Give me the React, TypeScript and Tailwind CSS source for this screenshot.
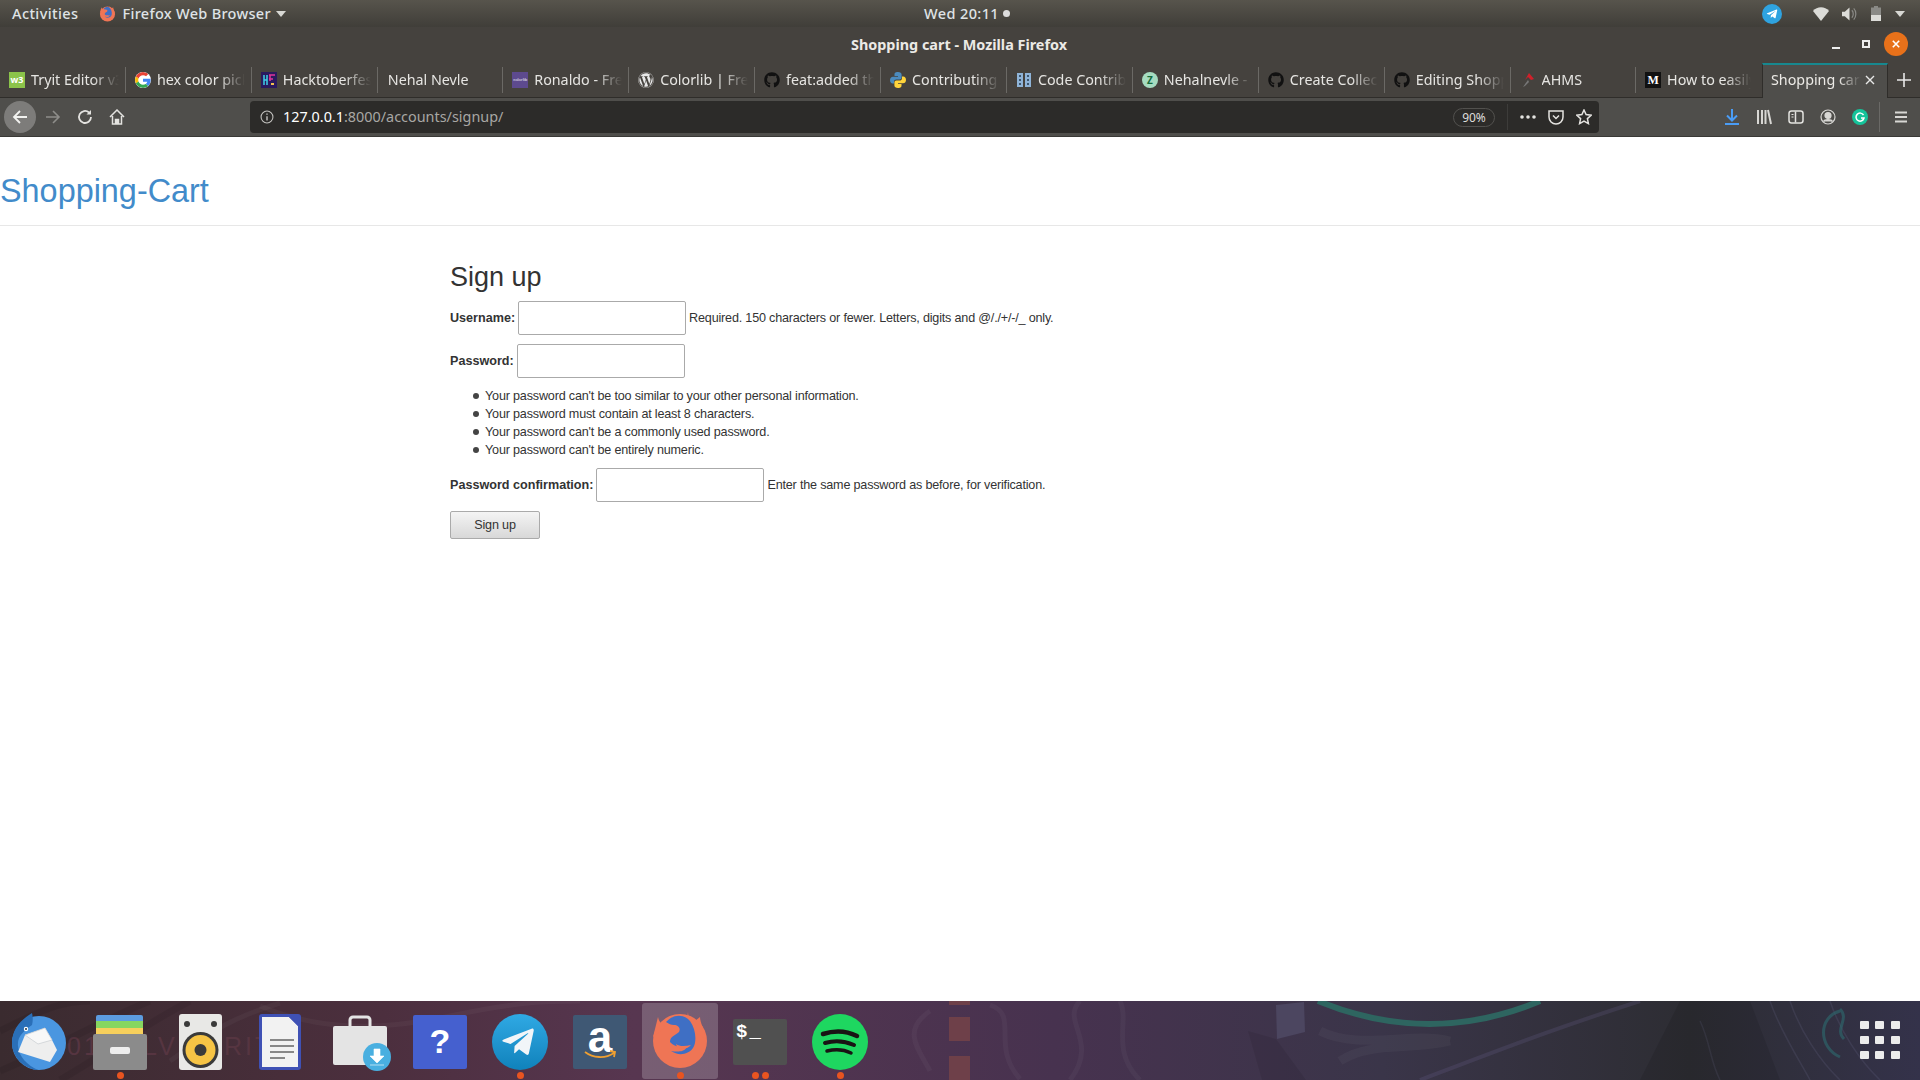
import { ReactNode } from "react";
import { FaGithub, FaWordpress, FaTelegramPlane } from "react-icons/fa";

function GoogleG() {
  return (
    <svg viewBox="0 0 48 48" className="w-4 h-4 rounded-full bg-white">
      <path fill="#EA4335" d="M24 9.500c3.500 0 6.700 1.200 9.200 3.600l6.800-6.800C35.900 2.400 30.500 0 24 0 14.600 0 6.500 5.400 2.600 13.200l8 6.200C12.400 13.700 17.700 9.500 24 9.500z" />
      <path fill="#4285F4" d="M47 24.500c0-1.600-.1-3.100-.4-4.500H24v9h12.900c-.6 3-2.200 5.500-4.700 7.200l7.700 6C44.400 38 47 31.900 47 24.500z" />
      <path fill="#FBBC05" d="M10.500 28.700c-.5-1.400-.8-3-.8-4.700s.3-3.200.8-4.700l-8-6.200C.9 16.400 0 20.100 0 24s.9 7.600 2.600 10.900l7.900-6.200z" />
      <path fill="#34A853" d="M24 48c6.500 0 11.900-2.100 15.900-5.800l-7.700-6c-2.200 1.400-4.900 2.300-8.200 2.300-6.300 0-11.600-4.200-13.500-9.900l-8 6.200C6.500 42.600 14.600 48 24 48z" />
    </svg>
  );
}

function FirefoxMark({ className }: { className: string }) {
  return (
    <svg viewBox="0 0 60 64" className={className}>
      <ellipse cx="30" cy="32" rx="27" ry="27" fill="#ef7555" />
      <path d="M8 8c1 6 5 8 8 10L3 28z" fill="#ef7555" />
      <path d="M38 3c0 7 4 7 7 9l5-4c0 6 5 14 6 22L36 18z" fill="#ef7555" />
      <path d="M16 13C23 5 34 5 40 12c6 8 7 21 3 27-5 7-15 8-22 3 6 1 13 1 15-3-6-1-13-2-16-6 0-6 6-7 9-10 2-4-1-7-5-7-3 0-5-1-8-3z" fill="#3f6fc4" />
      <path d="M26 35c4 3 10 2 15 1-3 4-9 5-14 2z" fill="#ef7555" />
    </svg>
  );
}

function PythonIcon() {
  return (
    <svg viewBox="0 0 16 16" className="w-4 h-4">
      <path d="M8 0C5 0 4.500 1.200 4.500 2.500V4H8v.7H3C1.200 4.700 0 6 0 8s1.100 3.500 2.800 3.500H4V9.700C4 8.300 5.100 7.400 6.400 7.400h3.200c1.100 0 2-.9 2-2V2.500C11.600 1 10.300 0 8 0z" fill="#4b8bbe" />
      <path d="M8 16c3 0 3.500-1.200 3.500-2.500V12H8v-.7h5c1.800 0 3-1.300 3-3.300s-1.100-3.500-2.800-3.500H12v1.800c0 1.400-1.100 2.300-2.400 2.300H6.400c-1.100 0-2 .9-2 2v2.900C4.400 15 5.700 16 8 16z" fill="#ffd43b" />
    </svg>
  );
}

const TABS: { title: string; icon?: ReactNode }[] = [
  { title: "Tryit Editor v3.6", icon: <span className="w-4 h-4 bg-[#8bc34a] text-white text-[9px] font-bold leading-4 text-center">w3</span> },
  { title: "hex color picker", icon: <GoogleG /> },
  {
    title: "Hacktoberfest",
    icon: (
      <svg viewBox="0 0 16 16" className="w-4 h-4">
        <rect width="16" height="16" fill="#2a1a5e" />
        <path d="M3 3v10M6 3v10M3 8h3" stroke="#3fd0e8" strokeWidth="1.500" />
        <path d="M8 3h6M8 7h4M9 3v6" stroke="#e0359b" strokeWidth="1.500" />
        <path d="M10 11h3v2h-3z" fill="#f2c14e" />
      </svg>
    ),
  },
  { title: "Nehal Nevle" },
  { title: "Ronaldo - Free", icon: <span className="w-4 h-4 bg-[#5d4a8e] text-white text-[4px] leading-4 text-center">colorlib</span> },
  { title: "Colorlib | Free", icon: <FaWordpress className="w-4 h-4 text-[#e8e8e8]" /> },
  { title: "feat:added the", icon: <FaGithub className="w-4 h-4 text-[#111]" /> },
  { title: "Contributing to", icon: <PythonIcon /> },
  {
    title: "Code Contributors",
    icon: (
      <svg viewBox="0 0 16 16" className="w-4 h-4">
        <rect x="1" y="1" width="14" height="14" fill="#8fb4d8" />
        <rect x="7" y="1" width="2" height="14" fill="#45423e" />
        <path d="M3 4h2M3 8h2M3 12h2M11 4h2M11 8h2M11 12h2" stroke="#23384d" strokeWidth="1.500" />
      </svg>
    ),
  },
  {
    title: "Nehalnevle - Overview",
    icon: <span className="w-4 h-4 rounded-full bg-[#a5dcc0] text-[#136b3c] text-[10px] font-bold leading-4 text-center">Z</span>,
  },
  { title: "Create Collection", icon: <FaGithub className="w-4 h-4 text-[#111]" /> },
  { title: "Editing Shopping", icon: <FaGithub className="w-4 h-4 text-[#111]" /> },
  {
    title: "AHMS",
    icon: (
      <svg viewBox="0 0 16 16" className="w-4 h-4">
        <path d="M9 1l5 6-3 1-3-3-3 3z" fill="#d0202a" />
        <path d="M8 8l-5 7 2-1 4-4z" fill="#777" />
      </svg>
    ),
  },
  { title: "How to easily", icon: <span className="w-4 h-4 bg-[#111] text-white text-[12px] font-bold leading-4 text-center font-['Liberation_Serif',serif]">M</span> },
];

function Tab({ title, icon, last }: { title: string; icon?: ReactNode; last: boolean }) {
  return (
    <div className={`w-[125.930px] h-full flex items-center ${icon ? "pl-[9px] gap-[6px]" : "pl-[10px]"} pr-[11px]`}>
      {icon && <span className="w-4 h-4 shrink-0 flex">{icon}</span>}
      <span className="flex-1 overflow-hidden whitespace-nowrap text-[14.300px] text-[#e6e5e2] [mask-image:linear-gradient(to_right,black_70%,transparent_100%)]">
        {title}
      </span>
      {!last && <span className="w-px h-[26px] bg-[#6b6965] shrink-0 -mr-[11px]" />}
    </div>
  );
}

function TopBar() {
  return (
    <div className="h-[27px] grid grid-cols-3 items-center bg-gradient-to-b from-[#57544c] to-[#403e39] text-[14.500px] font-medium tracking-[0.4px] text-[#dfe3e6]">
      <div className="flex items-center pl-3">
        <span>Activities</span>
        <FirefoxMark className="w-[17px] h-[18px] ml-[21px]" />
        <span className="ml-[6px] tracking-[0.3px]">Firefox Web Browser</span>
        <svg viewBox="0 0 10 6" className="w-[10px] h-[6px] ml-[5px]">
          <path d="M0 0h10L5 6z" fill="#d8d8d4" />
        </svg>
      </div>
      <div className="flex items-center justify-center gap-[4px] pl-[14px]">
        <span>Wed 20:11</span>
        <span className="w-[7px] h-[7px] rounded-full bg-[#dcdcdc]" />
      </div>
      <div className="flex items-center justify-end h-full">
        <span className="w-5 h-5 rounded-full bg-[#2fa3e0] flex items-center justify-center">
          <FaTelegramPlane className="w-3 h-3 text-white -ml-px" />
        </span>
        <svg viewBox="0 0 16 14" className="w-4 h-[14px] ml-[31px]">
          <path d="M0 4c4-5 12-5 16 0L8 14z" fill="#dcdcd8" />
        </svg>
        <svg viewBox="0 0 16 14" className="w-[15px] h-[14px] ml-[13px]">
          <path d="M0 4.500h3L8 0v14L3 9.500H0z" fill="#dcdcd8" />
          <path d="M10.500 3c2 2 2 6 0 8M12.500 1c3 3 3 9 0 12" stroke="#8a8a86" strokeWidth="1.300" fill="none" />
        </svg>
        <svg viewBox="0 0 10 15" className="w-[10px] h-[15px] ml-[14px]">
          <path d="M3 0h4v1.500h3V15H0V1.500h3z" fill="#8a8a86" />
          <path d="M0 9h10v6H0z" fill="#dcdcd8" />
        </svg>
        <svg viewBox="0 0 10 6" className="w-[10px] h-[6px] ml-[14px] mr-[15px]">
          <path d="M0 0h10L5 6z" fill="#d8d8d4" />
        </svg>
      </div>
    </div>
  );
}

function TitleBar() {
  return (
    <div className="h-9 bg-[#45423e] flex items-center relative">
      <span className="flex-1 text-center text-[14.400px] font-bold text-[#eceae6] -mt-[1px] pr-[2px]">Shopping cart - Mozilla Firefox</span>
      <span className="absolute left-[1832px] top-[20px] w-2 h-[2px] bg-[#eee]" />
      <span className="absolute left-[1862px] top-[13px] w-2 h-2 border-2 border-[#eee]" />
      <span className="absolute left-[1884px] top-[5px] w-6 h-6 rounded-full bg-[#e8711a] flex items-center justify-center">
        <svg viewBox="0 0 10 10" className="w-2 h-2">
          <path d="M1 1l8 8M9 1l-8 8" stroke="#fff" strokeWidth="2" />
        </svg>
      </span>
    </div>
  );
}

function TabStrip() {
  return (
    <div className="h-[35px] bg-[#45423e] border-b border-[#2f2d2a] flex items-stretch">
      <div className="flex h-[34px] w-[1762px] items-center">
        {TABS.map((t, i) => (
          <Tab key={t.title} title={t.title} icon={t.icon} last={i === TABS.length - 1} />
        ))}
      </div>
      <div className="w-[126px] h-[35px] bg-[#4f4e4b] border-t-2 border-t-[#17888f] border-x border-x-[#2f2d2a] flex items-center pl-[8px] pr-[8px] pb-[3px] gap-1 relative z-10">
        <span className="flex-1 overflow-hidden whitespace-nowrap text-[14.300px] text-[#eceae6] [mask-image:linear-gradient(to_right,black_75%,transparent_100%)]">
          Shopping cart - Mozilla
        </span>
        <svg viewBox="0 0 10 10" className="w-[10px] h-[10px] mr-[4px] shrink-0">
          <path d="M1 1l8 8M9 1l-8 8" stroke="#e8e8e8" strokeWidth="1.400" />
        </svg>
      </div>
      <div className="flex-1 flex items-center justify-center">
        <svg viewBox="0 0 14 14" className="w-[14px] h-[14px]">
          <path d="M7 0v14M0 7h14" stroke="#e8e8e8" strokeWidth="1.600" />
        </svg>
      </div>
    </div>
  );
}

function NavSlot({ width, children }: { width: string; children: ReactNode }) {
  return <span className={`${width} flex items-center justify-center shrink-0`}>{children}</span>;
}

function NavBar() {
  const stroke = "#e4e3e0";
  return (
    <div className="h-[39px] bg-[#4f4e4b] border-b border-[#3a3936] flex items-center">
      <div className="w-[250px] flex items-center shrink-0 pl-1">
        <span className="w-8 h-8 rounded-full bg-[#7d7c7a] flex items-center justify-center">
          <svg viewBox="0 0 16 16" className="w-4 h-4" fill="none" stroke="#f2f2f0" strokeWidth="1.800">
            <path d="M15 8H2M8 2L2 8l6 6" />
          </svg>
        </span>
        <svg viewBox="0 0 16 16" className="w-4 h-4 ml-[9px]" fill="none" stroke="#8e8d8a" strokeWidth="1.600">
          <path d="M1 8h13M8 2l6 6-6 6" />
        </svg>
        <svg viewBox="0 0 16 16" className="w-4 h-4 ml-[16px]" fill="none" stroke={stroke} strokeWidth="1.800">
          <path d="M14 8a6 6 0 1 1-2-4.500" />
          <path d="M14 1v4.500H9.500z" fill={stroke} stroke="none" />
        </svg>
        <svg viewBox="0 0 16 16" className="w-4 h-4 ml-[16px]" fill="none" stroke={stroke} strokeWidth="1.500">
          <path d="M1 8l7-7 7 7M3.500 7v8h9V7" />
          <path d="M6.500 15v-4.500h3V15" fill={stroke} />
        </svg>
      </div>
      <div className="w-[1349px] h-8 rounded-[4px] bg-[#2c2b29] flex items-center shrink-0">
        <svg viewBox="0 0 16 16" className="w-[14px] h-[14px] ml-[10px]" fill="none" stroke="#c4c3c0" strokeWidth="1.200">
          <circle cx="8" cy="8" r="6.800" />
          <path d="M8 7v5M8 4v1.500" strokeWidth="1.600" />
        </svg>
        <span className="ml-[9px] text-[14.400px] text-white">
          127.0.0.1<span className="text-[#a8a7a4]">:8000/accounts/signup/</span>
        </span>
        <span className="ml-auto w-[42px] h-[19px] rounded-full border border-[#52514e] text-[12px] leading-[17px] text-center text-[#dedddb]">90%</span>
        <span className="w-px h-[26px] bg-[#3d3c3a] ml-[12px]" />
        <svg viewBox="0 0 16 4" className="w-[16px] h-1 ml-[12px]">
          <circle cx="2" cy="2" r="1.800" fill={stroke} />
          <circle cx="8" cy="2" r="1.800" fill={stroke} />
          <circle cx="14" cy="2" r="1.800" fill={stroke} />
        </svg>
        <svg viewBox="0 0 16 16" className="w-4 h-4 ml-[12px]" fill="none" stroke={stroke} strokeWidth="1.500">
          <path d="M1 2h14v6a7 7 0 0 1-14 0z" />
          <path d="M5 6.500l3 3 3-3" />
        </svg>
        <svg viewBox="0 0 16 16" className="w-4 h-4 ml-[12px] mr-[7px]" fill="none" stroke={stroke} strokeWidth="1.500">
          <path d="M8 1l2.100 4.600 5 .6-3.700 3.400 1 5L8 12.100 3.600 14.600l1-5L.9 6.200l5-.6z" />
        </svg>
      </div>
      <div className="flex-1 flex items-center pl-[117px]">
        <NavSlot width="w-8">
          <svg viewBox="0 0 16 16" className="w-4 h-4" fill="none" stroke="#4a9cf5" strokeWidth="2">
            <path d="M8 0v11M3 6.500l5 5 5-5M1 15h14" />
          </svg>
        </NavSlot>
        <NavSlot width="w-8">
          <svg viewBox="0 0 16 16" className="w-4 h-4" fill="none" stroke="#d8d7d4" strokeWidth="2">
            <path d="M2 1v14M6 1v14M9.500 1v14M12 1l3 14" />
          </svg>
        </NavSlot>
        <NavSlot width="w-8">
          <svg viewBox="0 0 16 16" className="w-4 h-4" fill="none" stroke={stroke} strokeWidth="1.500">
            <rect x="1" y="2" width="14" height="12" rx="2.500" />
            <path d="M7.500 2.500v11" />
            <path d="M3.500 5.500h2M3.500 8h2" strokeWidth="1" />
          </svg>
        </NavSlot>
        <NavSlot width="w-8">
          <svg viewBox="0 0 16 16" className="w-4 h-4" fill="none" stroke="#d8d7d4" strokeWidth="1.200">
            <circle cx="8" cy="8" r="7" />
            <circle cx="8" cy="6.500" r="3" fill="#d8d7d4" />
            <path d="M3.500 12.500c1-2.500 8-2.500 9 0" fill="#d8d7d4" />
          </svg>
        </NavSlot>
        <NavSlot width="w-8">
          <span className="w-4 h-4 rounded-full bg-[#15c39a] flex items-center justify-center">
            <svg viewBox="0 0 10 10" className="w-[10px] h-[10px]" fill="none" stroke="#fff" strokeWidth="1.500">
              <path d="M8.500 3A4 4 0 1 0 9 6H6" />
            </svg>
          </span>
        </NavSlot>
        <span className="w-px h-[30px] bg-[#6a6966] ml-[3px]" />
        <NavSlot width="w-[42px]">
          <svg viewBox="0 0 14 12" className="w-[14px] h-3" stroke="#d8d7d4" strokeWidth="2.200">
            <path d="M1 1.500h12M1 6h12M1 10.500h12" />
          </svg>
        </NavSlot>
      </div>
    </div>
  );
}

function Field({ label, help }: { label: string; help?: string }) {
  return (
    <div className="flex items-center h-[34px]">
      <label className="font-bold mr-[3px]">{label}</label>
      <input type="text" className="w-[168px] h-[34px] bg-white border border-[#aaa] rounded-[2px] outline-none" />
      {help && <span className="ml-[3px] tracking-[-0.190px]">{help}</span>}
    </div>
  );
}

const PASSWORD_RULES = [
  "Your password can't be too similar to your other personal information.",
  "Your password must contain at least 8 characters.",
  "Your password can't be a commonly used password.",
  "Your password can't be entirely numeric.",
];

function SignupPage() {
  return (
    <div className="flex-1 bg-white font-['Liberation_Sans',sans-serif] text-[#333] text-[12.600px]">
      <div className="h-[89px] border-b border-[#e7e7e7] flex items-center">
        <a className="text-[32.400px] text-[#428bca] mt-[21px]">Shopping-Cart</a>
      </div>
      <div className="ml-[450px] pt-[36px]">
        <h2 className="text-[27px] leading-[30px] mb-[9px]">Sign up</h2>
        <Field label="Username:" help="Required. 150 characters or fewer. Letters, digits and @/./+/-/_ only." />
        <div className="mt-[9px]">
          <Field label="Password:" />
        </div>
        <ul className="mt-[9px] mb-[9px] pl-[23px] leading-[18px] tracking-[-0.180px]">
          {PASSWORD_RULES.map((rule) => (
            <li key={rule} className="flex items-center gap-[6px]">
              <span className="w-[6px] h-[6px] rounded-full bg-[#444] shrink-0" />
              {rule}
            </li>
          ))}
        </ul>
        <Field label="Password confirmation:" help="Enter the same password as before, for verification." />
        <button className="mt-[9px] w-[90px] h-[28px] rounded-[2px] border border-[#aaa] bg-gradient-to-b from-[#f4f4f4] to-[#d8d8d8] tracking-[-0.180px] text-[#333]">
          Sign up
        </button>
      </div>
    </div>
  );
}

function Dots({ count }: { count: number }) {
  return (
    <span className="absolute bottom-[1px] left-0 right-0 flex justify-center gap-[3px]">
      {Array.from({ length: count }).map((_, i) => (
        <span key={i} className="w-[7px] h-[7px] rounded-full bg-[#e95420]" />
      ))}
    </span>
  );
}

function DockItem({ dots = 0, active = false, children }: { dots?: number; active?: boolean; children: ReactNode }) {
  return (
    <div className="relative w-20 h-full flex items-center justify-center pt-[2px]">
      {active && <span className="absolute inset-x-[2px] top-[2px] bottom-[1px] rounded-[3px] bg-white/20" />}
      <span className="relative flex">{children}</span>
      {dots > 0 && <Dots count={dots} />}
    </div>
  );
}

// wallpaper behind the dock, only the shapes that show through
function DockBackdrop() {
  return (
    <svg viewBox="0 0 1920 79" preserveAspectRatio="none" className="absolute inset-0 w-full h-full">
      <g fill="#563541" fontFamily="Liberation Sans, sans-serif" fontSize="25" letterSpacing="3">
        <text x="67" y="54">01</text>
        <text x="143" y="54">LV</text>
        <text x="224" y="54">RITT</text>
      </g>
      <g fill="none" stroke="#000000" strokeOpacity="0.07" strokeWidth="7">
        <path d="M0 30C40 10 60 0 90 0M0 70C70 40 100 20 150 0M60 79C110 50 150 20 190 0" />
      </g>
      <g fill="none" stroke="#ffffff" strokeOpacity="0.035" strokeWidth="5">
        <path d="M260 5c60 25 120 25 190 10s100-15 130-15" />
        <path d="M170 60c30-20 50-40 110-58" />
        <path d="M930 10c-30 20-10 40 0 60M990 4c30 10 0 40 30 74M1080 0c-20 20 20 40-10 79M1120 0c10 20-10 50 20 79" />
        <path d="M1320 30c40 20 90 0 130 10M1340 60c30-20 70-10 110-20" strokeWidth="9" />
      </g>
      <g fill="none" stroke="#7a6fa8" strokeOpacity="0.18" strokeWidth="4">
        <path d="M1420 79c80-30 130-50 220-79" />
      </g>
      <g fill="none" stroke="#8a86b0" strokeOpacity="0.14" strokeWidth="1.500">
        <path d="M1770 0c10 30 30 60 40 79M1790 0c10 30 30 60 50 79M1830 0c10 30 30 60 50 79M1700 20c10 20 10 40 20 59" />
      </g>
      <path d="M1318 0Q1430 46 1540 0" fill="none" stroke="#2e6560" strokeWidth="6" />
      <rect x="949" y="16" width="21" height="24" fill="#6e4049" />
      <rect x="949" y="55" width="21" height="24" fill="#6e4049" />
      <rect x="949" y="0" width="21" height="4" fill="#6e4049" />
      <path d="M1276 4l28-3 1 30-28 7z" fill="#4c4660" />
      <path d="M1248 30l28 8 30 41h-44z" fill="#000" fillOpacity="0.08" />
      <path d="M1640 79l40-79h70l30 79z" fill="#000" fillOpacity="0.1" />
      <path d="M1840 10c-22 6-22 36 0 46M1840 8c10 10-6 20 4 30" fill="none" stroke="#2d6a70" strokeWidth="3" strokeOpacity="0.6" />
    </svg>
  );
}

function Dock() {
  return (
    <div className="h-[79px] relative overflow-hidden flex bg-[linear-gradient(to_right,#3a2b2f_0%,#4c2f3e_20%,#573650_33%,#47324f_55%,#3a3549_72%,#2d2d33_88%,#34324a_100%)]">
      <DockBackdrop />
      <DockItem>
        <svg viewBox="0 0 60 60" className="w-[60px] h-[60px]">
          <circle cx="29" cy="31" r="27" fill="#4a96e0" />
          <path d="M22 1C10 8 2 18 2 31c0 14 12 26 26 27-11-5-19-13-20-24-1-10 6-15 14-21 1-4 1-8 0-12z" fill="#2a6fb8" />
          <path d="M15 23l20-7 7 12 5 10-7 12-32-10z" fill="#eeeeee" />
          <path d="M15 23l13 9 14-4-7-12z" fill="#f8f8f8" stroke="#cdd0d4" strokeWidth="0.800" />
          <circle cx="16" cy="17" r="2.200" fill="#fff" />
          <circle cx="16" cy="17" r="1" fill="#234" />
        </svg>
      </DockItem>
      <DockItem dots={1}>
        <svg viewBox="0 0 56 56" className="w-14 h-14">
          <rect x="4" y="1" width="47" height="12" rx="2" fill="#5c9ce0" />
          <rect x="4" y="7" width="47" height="12" fill="#86d660" />
          <rect x="4" y="14" width="47" height="12" fill="#f6cf5c" />
          <rect x="1" y="20" width="54" height="36" rx="2" fill="#8b8b8b" />
          <rect x="18" y="33" width="20" height="7" rx="2" fill="#eeeeee" />
        </svg>
      </DockItem>
      <DockItem>
        <svg viewBox="0 0 56 56" className="w-14 h-14">
          <rect x="7" y="0" width="43" height="56" rx="3" fill="#e8e8e6" />
          <circle cx="15" cy="10" r="3" fill="#3a3a3a" />
          <circle cx="42" cy="10" r="3" fill="#3a3a3a" />
          <circle cx="28.500" cy="36" r="18" fill="#3a3a3a" />
          <circle cx="28.500" cy="36" r="15" fill="#f6c445" />
          <circle cx="28.500" cy="36" r="6" fill="#3a3a3a" />
        </svg>
      </DockItem>
      <DockItem>
        <svg viewBox="0 0 56 56" className="w-14 h-14">
          <rect x="7" y="0" width="42" height="56" rx="3" fill="#3f51b5" />
          <path d="M10 3h27l9 9v41H10z" fill="#f2f2f2" />
          <path d="M37 3l9 9V3z" fill="#3f51b5" />
          <path d="M18 26h24M18 32h24M18 38h24M18 44h15" stroke="#888" strokeWidth="2" />
        </svg>
      </DockItem>
      <DockItem>
        <svg viewBox="0 0 60 58" className="w-[60px] h-[58px] ml-[4px]">
          <path d="M18 14V7a3 3 0 0 1 3-3h14a3 3 0 0 1 3 3v7" fill="none" stroke="#e4e4e4" strokeWidth="3" />
          <rect x="1" y="13" width="54" height="39" rx="2" fill="#e4e4e4" />
          <ellipse cx="45" cy="44" rx="14" ry="14" fill="#49afe0" />
          <path d="M42 36h6v7h4l-7 7-7-7h4zM38 52h14" fill="#fff" stroke="#fff" strokeWidth="0.600" />
        </svg>
      </DockItem>
      <DockItem>
        <span className="w-[54px] h-[54px] rounded-[2px] bg-[#4560cf] flex items-center justify-center text-white text-[34px] font-bold font-['Liberation_Sans',sans-serif]">?</span>
      </DockItem>
      <DockItem dots={1}>
        <span className="w-14 h-14 rounded-full bg-gradient-to-b from-[#2fa9e4] to-[#0f82bb] flex items-center justify-center">
          <FaTelegramPlane className="w-9 h-9 text-[#f1f5f8] -ml-1" />
        </span>
      </DockItem>
      <DockItem>
        <span className="relative w-[54px] h-[54px] rounded-[2px] bg-[#3f5874] flex justify-center text-white text-[44px] leading-[44px] font-bold font-['Liberation_Sans',sans-serif]">
          a
          <svg viewBox="0 0 32 10" className="absolute left-[11px] bottom-[9px] w-8 h-[10px]" fill="none" stroke="#f0a030" strokeWidth="1.800">
            <path d="M1 2c8 6 20 7 29 1M26 1l5 1-1 5" />
          </svg>
        </span>
      </DockItem>
      <DockItem dots={1} active>
        <FirefoxMark className="w-[60px] h-[64px] -mt-[1px]" />
      </DockItem>
      <DockItem dots={2}>
        <span className="w-[54px] h-[46px] rounded-[2px] bg-[#505050] text-white text-[19px] font-bold font-['Liberation_Mono',monospace] pl-[3px] pt-[3px] leading-5 block">
          $<span className="ml-[2px]">_</span>
        </span>
      </DockItem>
      <DockItem dots={1}>
        <span className="w-14 h-14 rounded-full bg-[#1ed760] flex items-center justify-center">
          <svg viewBox="0 0 56 56" className="w-14 h-14" fill="none" stroke="#191414" strokeLinecap="round">
            <path d="M11 20c12-4 24-3 34 2" strokeWidth="4.500" />
            <path d="M13 29c10-3 20-2 29 2" strokeWidth="4" />
            <path d="M15 37c8-2 16-2 24 2" strokeWidth="3.500" />
          </svg>
        </span>
      </DockItem>
      <div className="ml-auto relative w-[40px] mr-[20px] self-center grid grid-cols-3 gap-y-[7px] -mt-[1px]">
        {Array.from({ length: 9 }).map((_, i) => (
          <span key={i} className={`w-[9px] h-[8px] rounded-[1px] bg-[#ececec] ${i % 3 === 1 ? "justify-self-center" : i % 3 === 2 ? "justify-self-end" : ""}`} />
        ))}
      </div>
    </div>
  );
}

export default function App() {
  return (
    <div className="w-[1920px] h-[1080px] flex flex-col overflow-hidden font-['Noto_Sans',sans-serif]">
      <TopBar />
      <TitleBar />
      <TabStrip />
      <NavBar />
      <SignupPage />
      <Dock />
    </div>
  );
}
